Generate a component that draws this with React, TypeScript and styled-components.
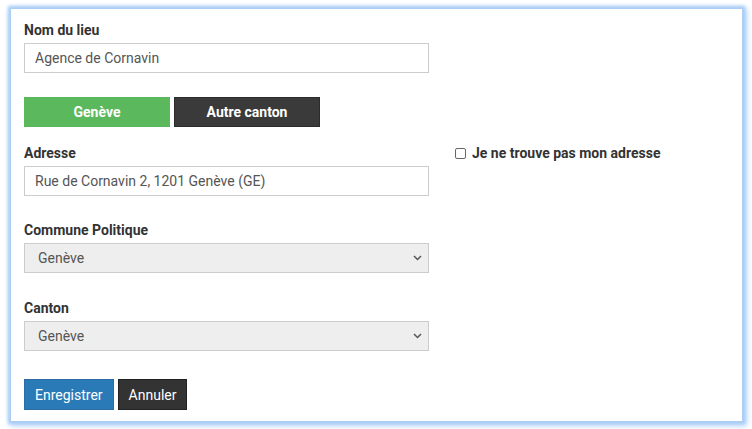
import React from "react";
import styled, { createGlobalStyle } from "styled-components";

const Global = createGlobalStyle`
  html, body { margin: 0; padding: 0; background: #fff; }
  body { font-family: Roboto, "Liberation Sans", Arial, sans-serif; }
  * { box-sizing: border-box; }
`;

const Page = styled.div`
  width: 752px;
  height: 429px;
  padding: 9px 10px 8px 11px;
  background: #fff;
`;

const Card = styled.div`
  width: 731px;
  height: 412px;
  background: #fff;
  box-shadow: 0 0 3px 3px #a9cdf6, 2px 2px 6px 3px #b7d6f8;
  padding: 11px 13px 0 13px;
  display: flex;
  gap: 26px;
`;

const LeftCol = styled.div`
  width: 405px;
  display: flex;
  flex-direction: column;
`;

const RightCol = styled.div`
  padding-top: 123px;
`;

const Field = styled.div<{ $mt?: number }>`
  display: flex;
  flex-direction: column;
  margin-top: ${(p) => p.$mt ?? 0}px;
`;

const Label = styled.label`
  font-size: 14px;
  font-weight: 700;
  color: #333;
  line-height: 20px;
  margin-bottom: 3px;
`;

const Input = styled.input`
  width: 405px;
  height: 30px;
  border: 1px solid #ccc;
  padding: 0 10px;
  font-family: Roboto, "Liberation Sans", Arial, sans-serif;
  font-size: 14px;
  color: #555;
  background: #fff;
  outline: none;
`;

const SelectBox = styled.div`
  width: 405px;
  height: 30px;
  border: 1px solid #ccc;
  background: #eee;
  padding: 0 6px 0 13px;
  display: flex;
  align-items: center;
  justify-content: space-between;
  font-size: 14px;
  color: #555;
`;

const Toggle = styled.div`
  display: flex;
  gap: 4px;
  margin-top: 24px;
`;

const ToggleBtn = styled.button<{ $active?: boolean }>`
  width: 146px;
  height: 30px;
  border: 1px solid ${(p) => (p.$active ? "#5cb85c" : "#2b2b2b")};
  background: ${(p) => (p.$active ? "#5cb85c" : "#3a3a3a")};
  color: #fff;
  font-family: Roboto, "Liberation Sans", Arial, sans-serif;
  font-weight: 700;
  font-size: 14px;
  padding: 0;
`;

const Actions = styled.div`
  display: flex;
  gap: 4px;
  margin-top: 28px;
`;

const ActionBtn = styled.button<{ $primary?: boolean }>`
  height: 31px;
  padding: 0 10px;
  border: 1px solid ${(p) => (p.$primary ? "#2e6da4" : "#222")};
  background: ${(p) => (p.$primary ? "#2a7ab8" : "#333")};
  color: #fff;
  font-family: Roboto, "Liberation Sans", Arial, sans-serif;
  font-size: 14px;
`;

const CheckRow = styled.label`
  display: flex;
  align-items: center;
  gap: 6px;
  font-size: 14px;
  font-weight: 700;
  color: #333;
  line-height: 20px;
`;

const Box = styled.span`
  width: 11px;
  height: 11px;
  border: 1px solid #666;
  border-radius: 2px;
  background: #fff;
  display: inline-block;
`;

const Chevron = () => (
  <svg width="9" height="6" viewBox="0 0 9 6">
    <path d="M1 1 L4.5 4.5 L8 1" fill="none" stroke="#555" strokeWidth="1.5" />
  </svg>
);

export default function App() {
  return (
    <>
      <Global />
      <Page>
        <Card>
          <LeftCol>
            <Field>
              <Label>Nom du lieu</Label>
              <Input defaultValue="Agence de Cornavin" />
            </Field>
            <Toggle>
              <ToggleBtn $active>Genève</ToggleBtn>
              <ToggleBtn>Autre canton</ToggleBtn>
            </Toggle>
            <Field $mt={16}>
              <Label>Adresse</Label>
              <Input defaultValue="Rue de Cornavin 2, 1201 Genève (GE)" />
            </Field>
            <Field $mt={24}>
              <Label>Commune Politique</Label>
              <SelectBox>
                <span>Genève</span>
                <Chevron />
              </SelectBox>
            </Field>
            <Field $mt={25}>
              <Label>Canton</Label>
              <SelectBox>
                <span>Genève</span>
                <Chevron />
              </SelectBox>
            </Field>
            <Actions>
              <ActionBtn $primary>Enregistrer</ActionBtn>
              <ActionBtn>Annuler</ActionBtn>
            </Actions>
          </LeftCol>
          <RightCol>
            <CheckRow>
              <Box />
              Je ne trouve pas mon adresse
            </CheckRow>
          </RightCol>
        </Card>
      </Page>
    </>
  );
}
